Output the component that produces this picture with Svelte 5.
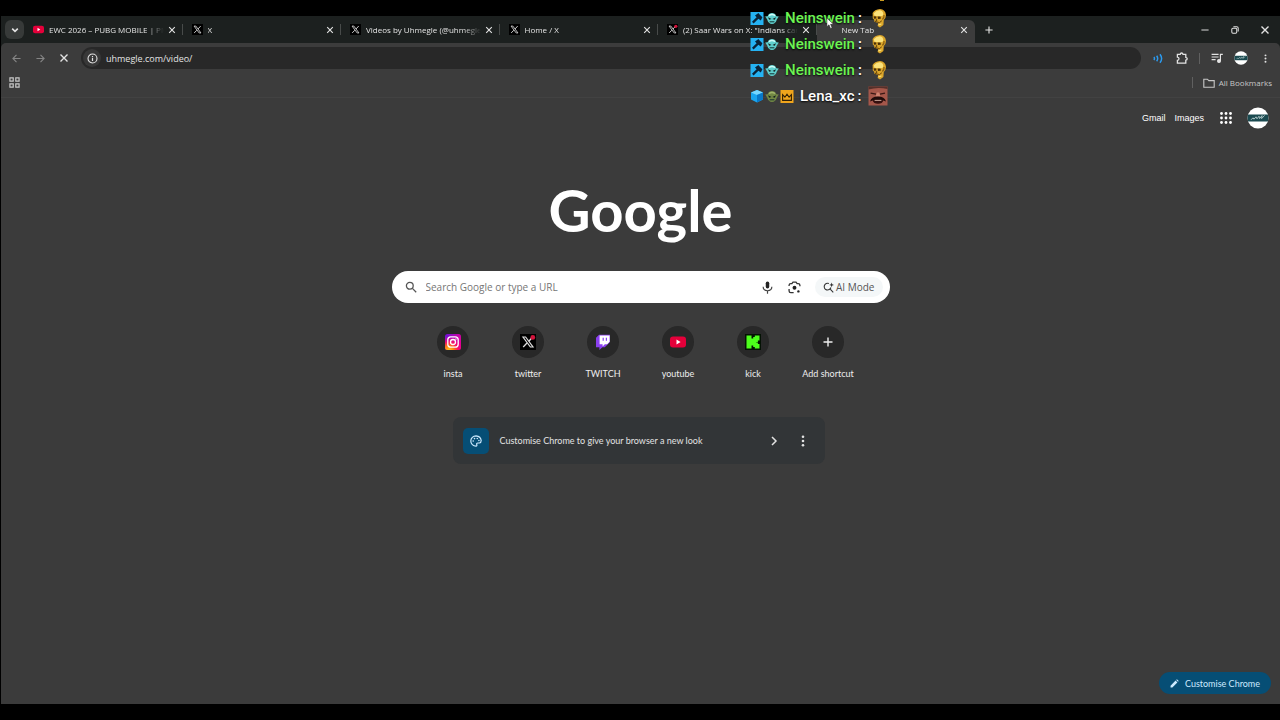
<script lang="ts">
  let url = $state("uhmegle.com/video/");
  let query = $state("");
  let activeTab = $state(5);

  const tabs = [
    { title: "EWC 2026 – PUBG MOBILE | PM", icon: "youtube" },
    { title: "X", icon: "x" },
    { title: "Videos by Uhmegle (@uhmegle", icon: "x" },
    { title: "Home / X", icon: "x" },
    { title: '(2) Saar Wars on X: "Indians can', icon: "x-dot" },
    { title: "New Tab", icon: "" },
  ];

  const shortcuts = [
    { name: "insta", icon: "instagram" },
    { name: "twitter", icon: "x-dot" },
    { name: "TWITCH", icon: "twitch" },
    { name: "youtube", icon: "youtube" },
    { name: "kick", icon: "kick" },
  ];

  const messages = [
    { user: "Neinswein", color: "#6cf552", badges: ["hammer", "alien"], emote: "skull" },
    { user: "Neinswein", color: "#6cf552", badges: ["hammer", "alien"], emote: "skull" },
    { user: "Neinswein", color: "#6cf552", badges: ["hammer", "alien"], emote: "skull" },
    { user: "Lena_xc", color: "#ffffff", badges: ["cube", "orc", "crown"], emote: "face" },
  ];
</script>

{#snippet siteIcon(name, size)}
  {#if name === "youtube"}
    <svg viewBox="0 0 16 16" width={size} height={size}>
      <rect x="0" y="2.5" width="16" height="11" rx="3" fill="#e4003a" />
      <path d="M6.5 5.6v4.8L10.6 8z" fill="#fff" />
    </svg>
  {:else if name === "x" || name === "x-dot"}
    <svg viewBox="0 0 16 16" width={size} height={size}>
      <rect width="16" height="16" fill="#000" />
      <path d="M3 3h2.6l7.4 10h-2.6z" fill="none" stroke="#ddd" stroke-width="1.2" />
      <path d="M12.6 3 8.9 7.2M7 9l-3.8 4" stroke="#ddd" stroke-width="1.3" />
      {#if name === "x-dot"}
        <circle cx="12.8" cy="3.4" r="2.4" fill="#d4143c" />
      {/if}
    </svg>
  {:else if name === "instagram"}
    <svg viewBox="0 0 16 16" width={size} height={size}>
      <defs>
        <linearGradient id="insta-base" x1="0" y1="0" x2="1" y2="0.4">
          <stop offset="0" stop-color="#6a12d8" />
          <stop offset="1" stop-color="#e0009a" />
        </linearGradient>
        <radialGradient id="insta-glow" cx="0.25" cy="1.05" r="0.9">
          <stop offset="0" stop-color="#ffd11a" />
          <stop offset="0.35" stop-color="#ff7a12" />
          <stop offset="0.65" stop-color="#ff0c5c" stop-opacity="0.8" />
          <stop offset="1" stop-color="#ff0080" stop-opacity="0" />
        </radialGradient>
      </defs>
      <rect width="16" height="16" rx="2.5" fill="url(#insta-base)" />
      <rect width="16" height="16" rx="2.5" fill="url(#insta-glow)" />
      <rect x="2.8" y="2.8" width="10.4" height="10.4" rx="3" fill="none" stroke="#fff" stroke-width="1.3" />
      <circle cx="8" cy="8" r="2.5" fill="none" stroke="#fff" stroke-width="1.3" />
      <circle cx="11" cy="5" r="0.7" fill="#fff" />
    </svg>
  {:else if name === "twitch"}
    <svg viewBox="0 0 16 16" width={size} height={size}>
      <path d="M4 .8 1 3.8v9.4h3.4V16l3-2.8h2.4l5.2-5.2V.8z" fill="#8a3ff0" />
      <path d="M4.6 1.4h10v6.4l-2.4 2.4H9.8L7.6 12.4v-2.2h-3z" fill="#fff" />
      <path d="M8.2 3.8v3M11.4 3.8v3" stroke="#8a3ff0" stroke-width="1.2" />
    </svg>
  {:else if name === "kick"}
    <svg viewBox="0 0 16 16" width={size} height={size}>
      <rect width="16" height="16" fill="#041204" />
      <path
        d="M1.5 1.5h5v3h1.7V3h1.6V1.5h4.7v5h-1.6V8h-1.6v.4h1.6V10h1.6v4.5H9.8V13H8.2v-1.5H6.5v3h-5z"
        fill="#4dff1c"
      />
    </svg>
  {/if}
{/snippet}

{#snippet cross(size)}
  <svg viewBox="0 0 10 10" width={size} height={size}>
    <path d="M1.5 1.5l7 7M8.5 1.5l-7 7" stroke="currentColor" stroke-width="1.4" />
  </svg>
{/snippet}

{#snippet plus(size)}
  <svg viewBox="0 0 10 10" width={size} height={size}>
    <path d="M5 0.5v9M0.5 5h9" stroke="currentColor" stroke-width="1.4" />
  </svg>
{/snippet}

{#snippet dots(size)}
  <svg viewBox="0 0 12 12" width={size} height={size} fill="currentColor">
    <circle cx="6" cy="1.8" r="1.3" />
    <circle cx="6" cy="6" r="1.3" />
    <circle cx="6" cy="10.2" r="1.3" />
  </svg>
{/snippet}

{#snippet avatar(size)}
  <svg viewBox="0 0 22 22" width={size} height={size}>
    <defs>
      <clipPath id="avatar-clip-{size}"><circle cx="11" cy="11" r="10.5" /></clipPath>
    </defs>
    <g clip-path="url(#avatar-clip-{size})">
      <rect width="22" height="22" fill="#fff" />
      <rect y="7.5" width="22" height="7" fill="#1b4a50" />
      <path d="M4 12.8l2-2 1 1.4 2-2.4 1 2 2-2.6.6 2.4 2.4-3-.4 3 3-3.2" fill="none" stroke="#b9cfd0" stroke-width="0.9" />
    </g>
  </svg>
{/snippet}

{#snippet badge(name)}
  <svg viewBox="0 0 14 14" width="14" height="14">
    {#if name === "hammer"}
      <rect x="0.5" y="1" width="13" height="13" fill="#25b2f2" />
      <path d="M5 4.4 8.4 2l1.2 1.4 2.8 2.8-1.6 3.2-2.4-1.6L3.6 12.4 2 10.8l4.6-4.6z" fill="#092338" />
    {:else if name === "alien" || name === "orc"}
      <path d="M.2 5.4 2.6 5.2Q4 2 7 2t4.4 3.2l2.4.2-2 3.200Q10.6 13 7 13T2.2 8.6z" fill={name === "alien" ? "#5fcfcd" : "#728844"} />
      <path d="M4 4.6Q7 2.4 10 4.6" fill="none" stroke={name === "alien" ? "#d0fbf8" : "#a2b56b"} stroke-width="1.4" />
      <path d="M3 6.2 6.6 8l-2.4.8zM11 6.2 7.4 8l2.4.8z" fill="#12201f" />
      <path d="M4.6 10.8h4.8" stroke="#12302f" stroke-width="1" />
    {:else if name === "cube"}
      <path d="M7 1l6 2.4v7L7 13.6 1 10.4v-7z" fill="#19a4ee" />
      <path d="M7 1l6 2.4L7 6 1 3.4z" fill="#75d6ff" />
      <path d="M7 6l6-2.6v7l-6 3.2z" fill="#0878c8" />
    {:else}
      <rect x="0.5" y="1" width="13" height="13" fill="#f0a51c" />
      <path d="M2.6 11.4V5.6l2.3 2.6L7 5.200l2.1 3 2.3-2.6v5.800z" fill="none" stroke="#322004" stroke-width="1.1" />
    {/if}
  </svg>
{/snippet}

{#snippet emote(name)}
  <svg viewBox="0 0 20 20" width="20" height="20">
    {#if name === "skull"}
      <path d="M3.6 5Q5.4 1.4 11 1q5.4.6 6 6-.2 3.6-2.2 5l-.4 5L11 19.4 8.6 18l.6-3-3.8-1.200-.2-2-1.4-1.2z" fill="#dba62a" />
      <path d="M4.8 5.2Q8 1.6 12 2.4q3 1.4 2 5l-2.6 1-6-.6z" fill="#fbe27a" />
      <path d="M4.6 8.2l2.6.2.2 2-2.4.4zM8.6 8.6l3-.2.2 2.4-2.8.2zM7 11.2l1.2.2v1.4H6.6z" fill="#4a2f06" />
      <path d="M6 13.4l4.4 1.2 2.4-1.8" fill="none" stroke="#6e4706" stroke-width="1" />
      <path d="M9.4 16.8l3-.8" stroke="#fbe27a" stroke-width="1.2" />
      <path d="M15 7q.4 2.8-1.600 4.600" fill="none" stroke="#8c6010" stroke-width="1.3" />
    {:else}
      <rect x="0.5" y="0.5" width="19" height="19" fill="#a5574a" />
      <path d="M.5.5h19V3Q10 .6.5 3.4z" fill="#55302a" />
      <path d="M2.6 7.2 8 8.2M12 8.2l5-1" stroke="#3a1815" stroke-width="1.3" />
      <path d="M8.8 6.5h2.4l1.2 4H7.6z" fill="#cf8270" />
      <path d="M2 15.6Q3.400 10.6 10 10.6t8 5l-2.6-1H4.6z" fill="#200b0a" />
      <path d="M4.6 14.2q5.4-1.4 10.8 0-.8 3.6-5.4 3.6t-5.4-3.6z" fill="#35100f" />
      <path d="M6.6 14.4h6.8" stroke="#d9b3a4" stroke-width="0.9" />
    {/if}
  </svg>
{/snippet}

<div class="screen">
  <div class="browser">
    <div class="tab-strip">
      <button class="tab-search" aria-label="Search tabs">
        <svg viewBox="0 0 10 10" width="10" height="10">
          <path d="M2.2 3.6 5 6.4l2.8-2.8" fill="none" stroke="currentColor" stroke-width="1.6" />
        </svg>
      </button>
      <div class="tabs">
        {#each tabs as tab, i}
          <div class="tab" class:active={i === activeTab}>
            <button class="tab-main" onclick={() => (activeTab = i)}>
              <span class="favicon">{@render siteIcon(tab.icon, 11)}</span>
              <span class="tab-title">{tab.title}</span>
            </button>
            <button class="tab-close" aria-label="Close {tab.title}">{@render cross(8)}</button>
          </div>
        {/each}
      </div>
      <button class="new-tab" aria-label="New tab">{@render plus(8)}</button>
      <div class="window-controls">
        <button aria-label="Minimise">
          <svg viewBox="0 0 10 10" width="8" height="8"><path d="M0.5 5h9" stroke="currentColor" stroke-width="1.2" /></svg>
        </button>
        <button aria-label="Restore">
          <svg viewBox="0 0 10 10" width="8" height="8" fill="none" stroke="currentColor" stroke-width="1.3">
            <rect x="1" y="2.8" width="6.2" height="6.2" rx="1.4" />
            <path d="M3 1h4.2Q9 1 9 2.8V7" />
          </svg>
        </button>
        <button aria-label="Close window">{@render cross(10)}</button>
      </div>
    </div>

    <div class="toolbar">
      <div class="nav">
        <button class="dim" aria-label="Back">
          <svg viewBox="0 0 10 10" width="9" height="9" fill="none" stroke="currentColor" stroke-width="1.2">
            <path d="M9.5 5H1M5 1 1 5l4 4" />
          </svg>
        </button>
        <button class="dim" aria-label="Forward">
          <svg viewBox="0 0 10 10" width="9" height="9" fill="none" stroke="currentColor" stroke-width="1.2">
            <path d="M.5 5H9M5 1l4 4-4 4" />
          </svg>
        </button>
        <button aria-label="Stop">{@render cross(10)}</button>
      </div>
      <div class="omnibox">
        <button class="site-info" aria-label="View site information">
          <svg viewBox="0 0 12 12" width="11" height="11">
            <circle cx="6" cy="6" r="4.9" fill="none" stroke="currentColor" stroke-width="1.2" />
            <path d="M6 5.4v3.2M6 3.2v1.3" stroke="currentColor" stroke-width="1.3" />
          </svg>
        </button>
        <input aria-label="Address" bind:value={url} />
      </div>
      <div class="actions">
        <button class="sound" aria-label="Sound">
          <svg viewBox="0 0 12 12" width="11" height="11" fill="none" stroke="currentColor" stroke-width="1.6">
            <path d="M1 4.4q1.2 1.6 0 3.2M4 3q2.2 3 0 6M7.6 1.4q3.6 4.6 0 9.2" />
          </svg>
        </button>
        <button aria-label="Extensions">
          <svg viewBox="0 0 12 12" width="12" height="12" fill="none" stroke="currentColor" stroke-width="1.3">
            <path d="M1.4 2.4h2.8q.2-1.4 1.4-1.4T7 2.4h2.8v3q1.4.2 1.4 1.4T9.8 8.2v3H1.4V8.4q1.6-.2 1.6-1.6T1.4 5.2z" />
          </svg>
        </button>
        <span class="divider"></span>
        <button aria-label="Media controls">
          <svg viewBox="0 0 12 12" width="12" height="12" fill="none" stroke="currentColor" stroke-width="1.2">
            <path d="M.6 2.4h7M.6 5h7M.6 7.6h4M9.4 9V2.4h2.4" />
            <circle cx="8" cy="9" r="1.4" fill="currentColor" />
          </svg>
        </button>
        <button aria-label="Profile">{@render avatar(14)}</button>
        <button aria-label="Menu">{@render dots(9)}</button>
      </div>
    </div>

    <div class="bookmarks">
      <button aria-label="Apps">
        <svg viewBox="0 0 12 12" width="11" height="11" fill="none" stroke="currentColor" stroke-width="1.3">
          <path d="M1 1h3.6v3.6H1zM7.4 1H11v3.6H7.4zM1 7.4h3.6V11H1zM7.4 7.4H11V11H7.4z" />
        </svg>
      </button>
      <button class="all-bookmarks">
        <svg viewBox="0 0 12 12" width="12" height="12" fill="none" stroke="currentColor" stroke-width="1.1">
          <path d="M.8 2.2h3.6l1.4 1.4h5.4v6.6H.8z" />
        </svg>
        All Bookmarks
      </button>
    </div>

    <main class="page">
      <header>
        <a href="#gmail">Gmail</a>
        <a href="#images">Images</a>
        <button class="apps" aria-label="Google apps">
          <svg viewBox="0 0 12 12" width="12" height="12" fill="currentColor">
            {#each [1.5, 6, 10.5] as y}
              {#each [1.5, 6, 10.5] as x}
                <circle cx={x} cy={y} r="1.4" />
              {/each}
            {/each}
          </svg>
        </button>
        <button aria-label="Google account">{@render avatar(22)}</button>
      </header>

      <h1>Google</h1>

      <form class="search" onsubmit={(e) => e.preventDefault()}>
        <svg viewBox="0 0 12 12" width="12" height="12" fill="none" stroke="#555" stroke-width="1.3">
          <circle cx="4.8" cy="4.8" r="3.4" />
          <path d="M7.4 7.4l3.8 3.8" />
        </svg>
        <input aria-label="Search" placeholder="Search Google or type a URL" bind:value={query} />
        <button type="button" aria-label="Search by voice">
          <svg viewBox="0 0 12 12" width="13" height="13">
            <rect x="4.4" y="0.4" width="3.2" height="6.6" rx="1.6" fill="#222" />
            <path d="M2 5.4q0 3.6 4 3.6t4-3.6M6 9v2.8" fill="none" stroke="#444" stroke-width="1.1" />
          </svg>
        </button>
        <button type="button" aria-label="Search by image">
          <svg viewBox="0 0 12 12" width="13" height="13" fill="none" stroke="#333" stroke-width="1.2">
            <path d="M1 4.6V4q0-1.6 1.6-1.6h1L4.6 1h2.8l1 1.4h1Q11 2.4 11 4v.8M1 7.4v1.8q0 1.6 1.6 1.6h2.6" />
            <circle cx="6" cy="6.2" r="1.8" fill="#222" stroke="none" />
            <circle cx="9.6" cy="9.6" r="1.1" fill="#222" stroke="none" />
          </svg>
        </button>
        <button type="button" class="ai-mode">
          <svg viewBox="0 0 12 12" width="11" height="11" fill="none" stroke="#333" stroke-width="1.2">
            <path d="M6.4 1.6A3.7 3.7 0 1 0 8.6 6M7.6 7.6l3.6 3.6" />
            <path d="M9.4.6l.7 1.9 1.9.7-1.9.7-.7 1.9-.7-1.9-1.9-.7 1.9-.7z" fill="#333" stroke="none" />
          </svg>
          AI Mode
        </button>
      </form>

      <nav class="shortcuts">
        {#each shortcuts as s}
          <a href="#{s.name}">
            <span class="tile">{@render siteIcon(s.icon, 16)}</span>
            {s.name}
          </a>
        {/each}
        <button>
          <span class="tile">{@render plus(10)}</span>
          Add shortcut
        </button>
      </nav>

      <section class="promo">
        <span class="promo-icon">
          <svg viewBox="0 0 12 12" width="12" height="12" fill="none" stroke="#cdeaff" stroke-width="1.2">
            <path d="M6 .8a5.2 5.2 0 1 0 0 10.4q1.2-.2.8-1.4-.6-1.6 1-1.8h1.6q1.8-.2 1.8-2.4Q10.8 1.2 6 .8z" />
            <g fill="#cdeaff" stroke="none">
              <circle cx="3.2" cy="6" r=".8" />
              <circle cx="4.5" cy="3.6" r=".8" />
              <circle cx="7.3" cy="3.5" r=".8" />
              <circle cx="8.9" cy="5.5" r=".8" />
            </g>
          </svg>
        </span>
        <p>Customise Chrome to give your browser a new look</p>
        <button aria-label="Open">
          <svg viewBox="0 0 10 10" width="10" height="10"><path d="M3 1l4 4-4 4" fill="none" stroke="currentColor" stroke-width="1.5" /></svg>
        </button>
        <button aria-label="More options">{@render dots(12)}</button>
      </section>

      <button class="customise">
        <svg viewBox="0 0 10 10" width="9" height="9" fill="currentColor">
          <path d="M.6 7.4 6.2 1.8l2 2L2.6 9.4h-2zM6.9 1.1l.8-.8 2 2-.8.8z" />
        </svg>
        Customise Chrome
      </button>
    </main>
  </div>

  <ul class="chat">
    {#each messages as m}
      <li>
        <span class="badges">
          {#each m.badges as b}{@render badge(b)}{/each}
        </span>
        <span style="color: {m.color}">{m.user}</span>
        <span class="colon">:</span>
        {@render emote(m.emote)}
      </li>
    {/each}
  </ul>
  <span class="chat-cut"></span>

  <svg class="cursor" viewBox="0 0 10 14" width="9" height="13">
    <path d="M1 1v9.5l2.3-2 1.7 4 1.8-.8-1.7-3.8h3.3z" fill="#fff" stroke="#222" stroke-width="0.6" />
  </svg>
</div>

<style>
  :global(body) {
    margin: 0;
    background: #000;
  }

  .screen {
    position: relative;
    box-sizing: border-box;
    min-height: 100vh;
    padding: 16px 0 16px 1px;
    display: flex;
    background: #000;
    color: #e3e3e3;
    font-family: Lato, "Open Sans", sans-serif;
    font-size: 9px;
    overflow: hidden;
  }

  button,
  input {
    font: inherit;
    color: inherit;
    background: none;
    border: none;
    padding: 0;
    margin: 0;
    outline: none;
  }

  button {
    display: flex;
    align-items: center;
    justify-content: center;
    cursor: pointer;
  }

  a {
    color: inherit;
    text-decoration: none;
  }

  svg {
    display: block;
    flex: none;
  }

  .browser {
    flex: 1;
    min-width: 0;
    display: flex;
    flex-direction: column;
    background: #1c201f;
  }

  .tab-strip {
    display: flex;
    height: 27px;
    align-items: center;
    padding-left: 4px;
    font-family: "Open Sans", sans-serif;
    font-size: 8px;
  }

  .tab-search {
    flex: none;
    width: 19px;
    height: 19px;
    border-radius: 6px;
    background: #373a39;
  }

  .tabs {
    display: flex;
    flex: 0 1 951px;
    min-width: 0;
    align-self: stretch;
  }

  .tab {
    flex: 1 1 0;
    min-width: 0;
    display: flex;
    align-items: center;
    gap: 1px;
    padding: 0 4px 0 9px;
    position: relative;
  }

  .tab:not(.active)::after {
    content: "";
    position: absolute;
    right: 0;
    width: 1px;
    height: 11px;
    background: #484b4a;
  }

  .tab.active {
    margin-top: 4px;
    margin-bottom: -1px;
    padding-bottom: 5px;
    border-radius: 6px 6px 0 0;
    background: #3c3c3c;
  }

  .tab-main {
    flex: 1;
    min-width: 0;
    justify-content: flex-start;
    gap: 5px;
  }

  .favicon {
    flex: none;
    min-width: 11px;
  }

  .tab-title {
    flex: 1;
    text-align: left;
    white-space: nowrap;
    overflow: hidden;
    line-height: 12px;
    mask-image: linear-gradient(to right, #000 85%, transparent);
  }

  .tab-close {
    width: 14px;
    height: 14px;
  }

  .new-tab {
    width: 27px;
    height: 27px;
  }

  .window-controls {
    display: flex;
    margin-left: auto;
  }

  .window-controls button {
    width: 30px;
    height: 26px;
  }

  .toolbar {
    display: flex;
    align-items: center;
    gap: 5px;
    height: 30px;
    padding: 0 3px;
    border-radius: 5px 5px 0 0;
    background: #3c3c3c;
  }

  .nav {
    display: flex;
  }

  .nav button {
    width: 24px;
    height: 22px;
  }

  .dim {
    color: #858585;
  }

  .omnibox {
    flex: 1;
    display: flex;
    align-items: center;
    gap: 5px;
    height: 22px;
    padding-left: 2px;
    border-radius: 11px;
    background: #282828;
  }

  .site-info {
    width: 18px;
    height: 18px;
    border-radius: 50%;
    background: #383838;
  }

  .omnibox input {
    flex: 1;
    min-width: 0;
    font-family: "Open Sans", sans-serif;
  }

  .actions {
    display: flex;
    align-items: center;
  }

  .actions button {
    width: 24px;
    height: 22px;
  }

  .sound {
    color: #2b9bf0;
  }

  .divider {
    width: 1px;
    height: 11px;
    margin: 0 5px;
    background: #606060;
  }

  .bookmarks {
    box-sizing: border-box;
    display: flex;
    align-items: center;
    justify-content: space-between;
    height: 25px;
    padding: 0 8px 5px;
    background: #3c3c3c;
    border-bottom: 1px solid #424242;
    color: #c8c8c8;
    font-family: "Open Sans", sans-serif;
    font-size: 8px;
  }

  .all-bookmarks {
    gap: 4px;
    height: 11px;
    padding-left: 10px;
    border-left: 1px solid #606060;
  }

  .page {
    flex: 1;
    display: flex;
    flex-direction: column;
    align-items: center;
    background: #3b3b3b;
  }

  header {
    align-self: stretch;
    display: flex;
    align-items: center;
    justify-content: flex-end;
    gap: 9px;
    height: 39px;
    padding: 0 11px;
    color: #fff;
    font-family: "Liberation Sans", sans-serif;
  }

  .apps {
    width: 25px;
  }

  h1 {
    margin: 31px 0 19px;
    color: #fff;
    font-family: Lato, sans-serif;
    font-size: 58px;
    font-weight: 700;
    line-height: 84px;
  }

  .search {
    box-sizing: border-box;
    display: flex;
    align-items: center;
    gap: 14px;
    width: 498px;
    max-width: 90%;
    height: 32px;
    padding: 0 7px 0 13px;
    border-radius: 16px;
    background: #fff;
    color: #555;
    font-family: "Open Sans", sans-serif;
    font-size: 10px;
  }

  .search input {
    flex: 1;
    min-width: 0;
    margin-left: -5px;
  }

  .search input::placeholder {
    color: #757575;
    opacity: 1;
  }

  .search .ai-mode {
    gap: 2px;
    height: 20px;
    padding: 0 8px;
    border-radius: 10px;
    background: #f4f7f8;
  }

  .shortcuts {
    display: flex;
    margin-top: 23px;
    color: #eee;
  }

  .shortcuts a,
  .shortcuts button {
    display: flex;
    flex-direction: column;
    align-items: center;
    gap: 10px;
    width: 75px;
    line-height: 12px;
  }

  .tile {
    display: flex;
    align-items: center;
    justify-content: center;
    width: 32px;
    height: 32px;
    border-radius: 50%;
    background: #282828;
  }

  .promo {
    box-sizing: border-box;
    display: flex;
    align-items: center;
    width: 372px;
    max-width: 90%;
    height: 47px;
    margin-top: 37px;
    margin-right: 4px;
    padding: 0 10px;
    border-radius: 8px;
    background: #323537;
  }

  .promo-icon {
    display: flex;
    align-items: center;
    justify-content: center;
    width: 26px;
    height: 26px;
    border-radius: 5px;
    background: #064e75;
  }

  .promo p {
    flex: 1;
    margin: 0 0 0 11px;
  }

  .promo button {
    width: 24px;
    height: 24px;
    margin-left: 5px;
  }

  .customise {
    align-self: flex-end;
    gap: 6px;
    height: 22px;
    margin: auto 9px 10px 0;
    padding: 0 11px;
    border-radius: 11px;
    background: #064e75;
    color: #cdeaff;
  }

  /* stream chat drawn over the browser window */
  .chat {
    position: absolute;
    top: 5px;
    left: 750px;
    margin: 0;
    padding: 0;
    list-style: none;
    font-family: Roboto, sans-serif;
    font-size: 15px;
    font-weight: 500;
    color: #fff;
    pointer-events: none;
  }

  .chat li {
    display: flex;
    align-items: center;
    height: 26px;
    text-shadow: 0 1px 2px #000;
  }

  .badges {
    display: flex;
    gap: 1px;
    margin-right: 6px;
  }

  .colon {
    margin: 0 7px 0 3px;
  }

  .chat-cut {
    position: absolute;
    top: 0;
    left: 880px;
    width: 4px;
    height: 1px;
    background: #c99a20;
  }

  .cursor {
    position: absolute;
    top: 17px;
    left: 826px;
  }
</style>
